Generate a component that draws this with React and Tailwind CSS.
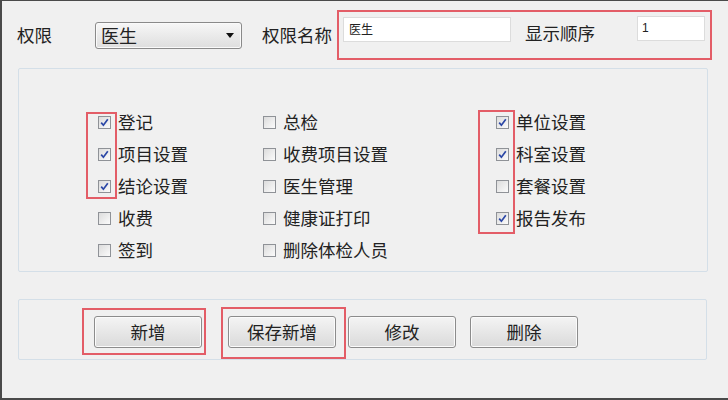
const FONT = "font-['Noto_Sans_CJK_SC','Microsoft_YaHei',sans-serif]";

const COLUMNS = [
    {
        width: 'w-[165px]',
        items: [
            { label: '登记', checked: true },
            { label: '项目设置', checked: true },
            { label: '结论设置', checked: true },
            { label: '收费', checked: false },
            { label: '签到', checked: false },
        ],
    },
    {
        width: 'w-[233px]',
        items: [
            { label: '总检', checked: false },
            { label: '收费项目设置', checked: false },
            { label: '医生管理', checked: false },
            { label: '健康证打印', checked: false },
            { label: '删除体检人员', checked: false },
        ],
    },
    {
        width: 'w-[180px]',
        items: [
            { label: '单位设置', checked: true },
            { label: '科室设置', checked: true },
            { label: '套餐设置', checked: false },
            { label: '报告发布', checked: true },
        ],
    },
];

const CheckBox = ({ checked }) => (
    <span className="flex items-center justify-center w-[13px] h-[13px] border border-[#8f9297] bg-gradient-to-br from-[#dcdcdc] to-[#fbfbfb] shrink-0">
        {checked && (
            <svg width="9" height="9" viewBox="0 0 9 9">
                <path d="M1.2 4.6 L3.4 7.2 L7.8 1.2" fill="none" stroke="#2b47a6" strokeWidth="1.7" />
            </svg>
        )}
    </span>
);

const Btn = ({ children }) => (
    <button className="w-[108px] h-[32px] rounded-[3px] border border-[#8c8c8c] bg-gradient-to-b from-[#f4f4f4] to-[#dadada] text-[17.5px] text-[#222] leading-none shadow-[inset_0_0_0_1px_#fbfbfb]">
        {children}
    </button>
);

export default function App() {
    return (
        <div className={`${FONT} w-[728px] h-[400px] bg-[#f0f0f0] border-t border-l-2 border-b-2 border-[#4a4a4a] text-[#222] overflow-hidden`}>
            {/* top row */}
            <div className="flex items-center mt-[9px] h-[50px]">
                <span className="ml-[15px] w-[36px] text-[17.5px]">权限</span>
                <div className="ml-[42px] w-[147px] h-[27px] flex items-center justify-between pl-[5px] pr-[7px] rounded-[3px] border border-[#8a8a8a] bg-gradient-to-b from-[#f7f7f7] to-[#dedede] shadow-[inset_0_0_0_1px_#fafafa]">
                    <span className="text-[18px] leading-none">医生</span>
                    <svg width="8" height="5" viewBox="0 0 8 5"><path d="M0 0 H8 L4 5 Z" fill="#111" /></svg>
                </div>
                <span className="ml-[20px] w-[75px] text-[17.5px]">权限名称</span>
                <div className="w-[375px] h-[50px] border-2 border-[#e35d67] flex items-start pl-[4px]">
                    <div className="mt-[5px] w-[168px] h-[25px] bg-white border border-[#dcdcdc] pl-[5px] pt-[3px] text-[12px] leading-[16px]">医生</div>
                    <span className="ml-[14px] mt-[9px] w-[112px] text-[17.5px] leading-[24px]">显示顺序</span>
                    <div className="mt-[4px] w-[68px] h-[25px] bg-white border border-[#dcdcdc] pl-[4px] pt-[3px] text-[12px] leading-[16px] font-['Liberation_Sans',sans-serif]">1</div>
                </div>
            </div>

            {/* permissions panel */}
            <div className="relative ml-[16px] mt-[8px] w-[690px] h-[204px] border border-[#d4dfe8] rounded-[2px] pl-[79px] pt-[37px] flex">
                {COLUMNS.map((col, ci) => (
                    <div key={ci} className={`${col.width} flex flex-col`}>
                        {col.items.map((it) => (
                            <div key={it.label} className="h-[32px] flex items-center">
                                <CheckBox checked={it.checked} />
                                <span className="ml-[7px] text-[17.5px] leading-none">{it.label}</span>
                            </div>
                        ))}
                    </div>
                ))}
                <div className="absolute left-[67px] top-[43px] w-[31px] h-[87px] border-2 border-[#e35d67]" />
                <div className="absolute left-[459px] top-[41px] w-[37px] h-[124px] border-2 border-[#e35d67]" />
            </div>

            {/* buttons panel */}
            <div className="ml-[16px] mt-[27px] w-[689px] h-[61px] border border-[#d4dfe8] rounded-[2px] flex items-start">
                <div className="ml-[63px] mt-[8px] border-2 border-[#e35d67] pl-[10px] pr-[2px] pt-[6px] pb-[5px]">
                    <Btn>新增</Btn>
                </div>
                <div className="ml-[15px] mt-[7px] border-2 border-[#e35d67] pl-[5px] pr-[8px] pt-[7px] pb-[9px]">
                    <Btn>保存新增</Btn>
                </div>
                <div className="ml-[2px] mt-[16px]">
                    <Btn>修改</Btn>
                </div>
                <div className="ml-[14px] mt-[16px]">
                    <Btn>删除</Btn>
                </div>
            </div>
        </div>
    );
}
